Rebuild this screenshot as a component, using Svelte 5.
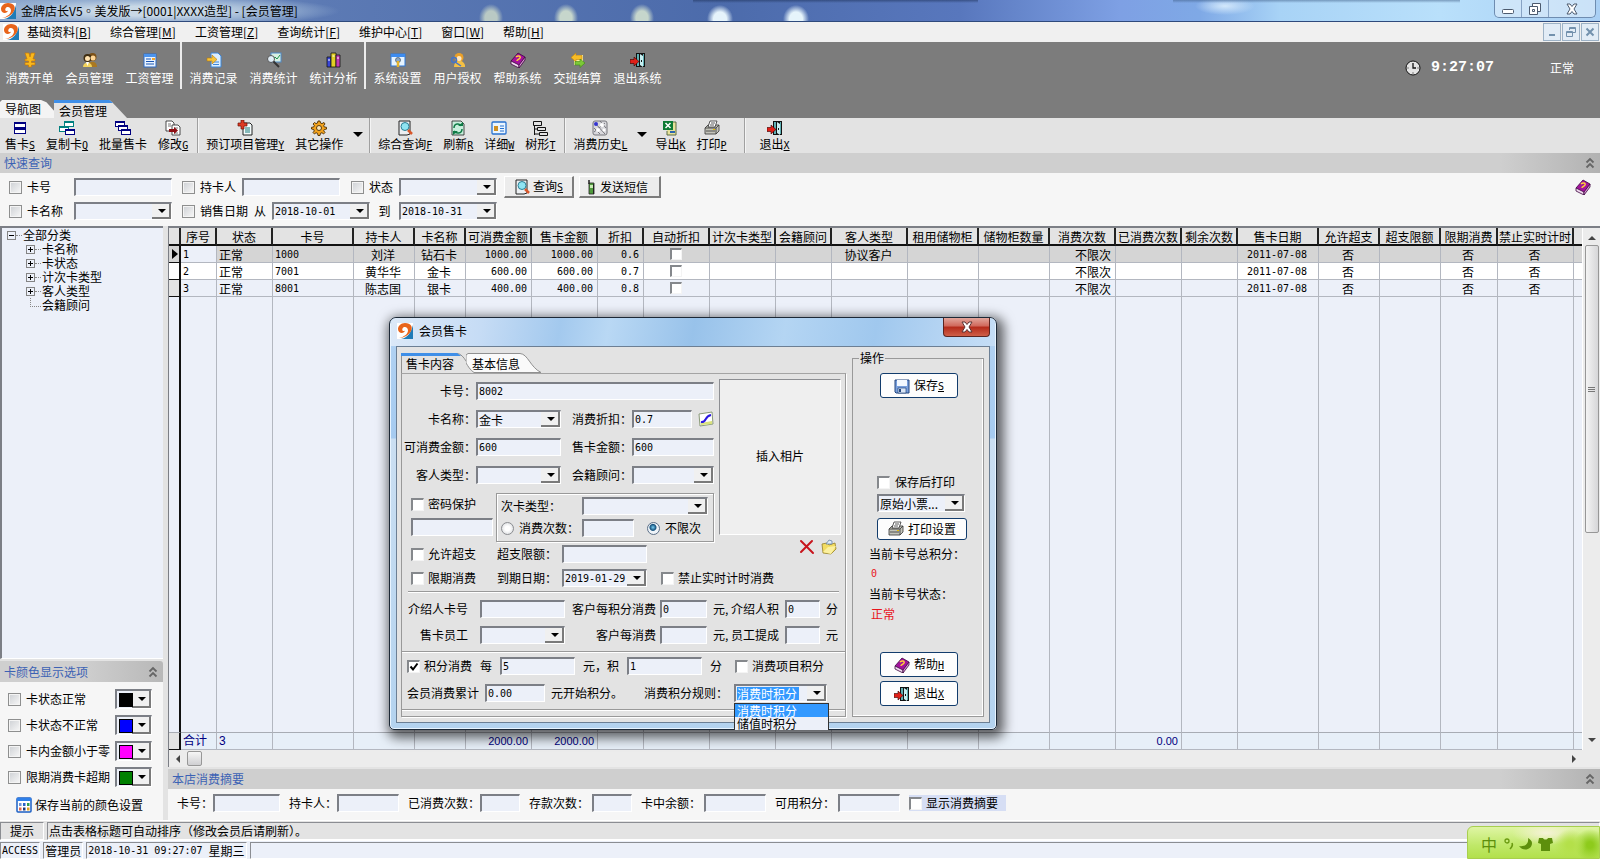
<script lang="ts">
    interface Tool {
        icon: string;
        text: string;
        key?: string;
        menu?: boolean;
    }

    interface Column {
        title: string;
        width: number;
        align: string;
        total?: string;
    }

    const menus = [
        ['基础资料', 'B'],
        ['综合管理', 'M'],
        ['工资管理', 'Z'],
        ['查询统计', 'F'],
        ['维护中心', 'T'],
        ['窗口', 'W'],
        ['帮助', 'H'],
    ];

    const navGroups: Tool[][] = [
        [
            { icon: 'yen', text: '消费开单' },
            { icon: 'members', text: '会员管理' },
            { icon: 'wage', text: '工资管理' },
        ],
        [
            { icon: 'record', text: '消费记录' },
            { icon: 'stats', text: '消费统计' },
            { icon: 'books', text: '统计分析' },
        ],
        [
            { icon: 'settings', text: '系统设置' },
            { icon: 'auth', text: '用户授权' },
            { icon: 'help', text: '帮助系统' },
            { icon: 'shift', text: '交班结算' },
            { icon: 'exit', text: '退出系统' },
        ],
    ];

    const toolGroups: Tool[][] = [
        [
            { icon: 'card', text: '售卡', key: 'S' },
            { icon: 'copycard', text: '复制卡', key: 'Q' },
            { icon: 'batch', text: '批量售卡' },
            { icon: 'edit', text: '修改', key: 'G' },
        ],
        [
            { icon: 'book', text: '预订项目管理', key: 'Y' },
            { icon: 'gear', text: '其它操作', menu: true },
        ],
        [
            { icon: 'search', text: '综合查询', key: 'F' },
            { icon: 'refresh', text: '刷新', key: 'R' },
            { icon: 'detail', text: '详细', key: 'W' },
            { icon: 'tree', text: '树形', key: 'T' },
        ],
        [
            { icon: 'history', text: '消费历史', key: 'L', menu: true },
            { icon: 'excel', text: '导出', key: 'K' },
            { icon: 'print', text: '打印', key: 'P' },
        ],
        [{ icon: 'exit', text: '退出', key: 'X' }],
    ];

    const treeNodes = ['卡名称', '卡状态', '计次卡类型', '客人类型', '会籍顾问'];

    const cardColors = [
        { text: '卡状态正常', color: '#000000' },
        { text: '卡状态不正常', color: '#0000ff' },
        { text: '卡内金额小于零', color: '#ff00ff' },
        { text: '限期消费卡超期', color: '#008000' },
    ];

    const columns: Column[] = [
        { title: '序号', width: 36, align: 'left', total: '合计' },
        { title: '状态', width: 56, align: 'left', total: '3' },
        { title: '卡号', width: 81, align: 'left' },
        { title: '持卡人', width: 61, align: 'center' },
        { title: '卡名称', width: 51, align: 'center' },
        { title: '可消费金额', width: 66, align: 'right', total: '2000.00' },
        { title: '售卡金额', width: 66, align: 'right', total: '2000.00' },
        { title: '折扣', width: 46, align: 'right' },
        { title: '自动折扣', width: 66, align: 'center' },
        { title: '计次卡类型', width: 66, align: 'center' },
        { title: '会籍顾问', width: 56, align: 'center' },
        { title: '客人类型', width: 76, align: 'center' },
        { title: '租用储物柜', width: 71, align: 'center' },
        { title: '储物柜数量', width: 71, align: 'center' },
        { title: '消费次数', width: 66, align: 'right' },
        { title: '已消费次数', width: 66, align: 'right', total: '0.00' },
        { title: '剩余次数', width: 56, align: 'right' },
        { title: '售卡日期', width: 81, align: 'center' },
        { title: '允许超支', width: 61, align: 'center' },
        { title: '超支限额', width: 61, align: 'center' },
        { title: '限期消费', width: 57, align: 'center' },
        { title: '禁止实时计时', width: 76, align: 'center' },
    ];

    const CHECK = 8;

    const rows = [
        ['1', '正常', '1000', '刘洋', '钻石卡', '1000.00', '1000.00', '0.6', '', '', '', '协议客户', '', '', '不限次', '', '', '2011-07-08', '否', '', '否', '否'],
        ['2', '正常', '7001', '黄华华', '金卡', '600.00', '600.00', '0.7', '', '', '', '', '', '', '不限次', '', '', '2011-07-08', '否', '', '否', '否'],
        ['3', '正常', '8001', '陈志国', '银卡', '400.00', '400.00', '0.8', '', '', '', '', '', '', '不限次', '', '', '2011-07-08', '否', '', '否', '否'],
    ];

    const summary = [
        { label: '卡号：', size: 'w67' },
        { label: '持卡人：', size: 'w62' },
        { label: '已消费次数：', size: 'w40' },
        { label: '存款次数：', size: 'w40' },
        { label: '卡中余额：', size: 'w62' },
        { label: '可用积分：', size: 'w62' },
    ];

    const rules = ['消费时积分', '储值时积分'];

    let current = $state(0);
    let rule = $state(0);

    const isLatin = (text: string) => /^[\x20-\x7e]+$/.test(text);
</script>

{#snippet logo()}
    <svg class="icon" viewBox="0 0 16 16" aria-hidden="true">
        <rect width="16" height="16" fill="#fff" />
        <path d="M16 2v14H4c6-1 10-6 12-14z" fill="#1f7cb8" />
        <path d="M8 0c6 0 8 4 6 8-2 4-7 7-12 7 5-1 9-4 9-7.500C11 4 7 3 5.500 5.500c-1 2 1 3.500 2.500 2C7.500 11 1 11 1 6c0-3 3-6 7-6z" fill="#e8641b" />
    </svg>
{/snippet}

{#snippet door()}
    <path d="M6 1h9v14H6z" fill="#111" />
    <path d="M7 2h2v12H7zM13 2h1v12h-1z" fill="#5fb0b4" />
    <path d="M10 2l3 2v11l-3-2z" fill="#c8eef0" />
    <path d="M11 8h1v2h-1z" fill="#111" />
    <path d="M0 7.500h4V5l5 4.500L4 14v-2.500H0z" fill="#e02018" stroke="#300" stroke-width=".6" />
{/snippet}

{#snippet windowShape(x: number, y: number, color: string)}
    <rect {x} {y} width="10" height="6" fill={color} />
    <rect x={x + 1} y={y + 2} width="8" height="3" fill="#fff" />
{/snippet}

{#snippet icon(name: string)}
    <svg class="icon" viewBox="0 0 16 16" aria-hidden="true">
        {#if name === 'yen'}
            <path d="M3 1h4l1 4 1-4h4l-2 6h2v2H9.500v1.500H13V13H9.500v2h-3v-2H3v-2.500h3.500V9H3V7h2z" fill="#f9b91c" stroke="#c77808" stroke-width=".7" />
        {:else if name === 'members'}
            <circle cx="10.500" cy="5" r="4" fill="#7b5017" />
            <path d="M6 15c0-7 9-7 9 0z" fill="#a97822" />
            <circle cx="5.500" cy="6" r="4" fill="#3f2d11" />
            <circle cx="5.500" cy="6.500" r="2.500" fill="#ffe2b0" />
            <circle cx="11" cy="6" r="2.500" fill="#ffd695" />
            <path d="M1 15c0-6 9-6 9 0z" fill="#f2d35c" />
            <path d="M4 10h3l-1.500 4z" fill="#fff" />
        {:else if name === 'wage'}
            <rect x="2" y="2" width="12" height="13" fill="#eaf4ff" stroke="#2d6bc4" />
            <path d="M2 2h12v3H2z" fill="#4b93ec" />
            <path d="M4 7h5M4 9.500h8M4 12h8" stroke="#1a56b4" />
            <path d="M10 6h3v2h-3z" fill="#f2a630" />
        {:else if name === 'record'}
            <path d="M5 1h7l3 3v11H5z" fill="#dcefff" stroke="#3d86d8" />
            <path d="M7 10h6M7 12.500h6" stroke="#3d86d8" />
            <path d="M1 6h5V3l5 4.500L6 12V9H1z" fill="#f7c43a" stroke="#b67a0c" stroke-width=".6" />
        {:else if name === 'stats'}
            <rect x="5" y="1" width="10" height="9" fill="#d8f0e4" stroke="#4f8ccb" />
            <path d="M6 8l3-3 2 2 3-4" fill="none" stroke="#1c944c" />
            <circle cx="5" cy="7" r="3.500" fill="#e9f5ff" fill-opacity=".9" stroke="#555" />
            <path d="M7.500 9.500L13 15" stroke="#333" stroke-width="2" />
        {:else if name === 'books'}
            <path d="M1 5h4v10H1z" fill="#3946d8" stroke="#111" stroke-width=".8" />
            <path d="M5 1h5v14H5z" fill="#e2cf26" stroke="#111" stroke-width=".8" />
            <path d="M10 3h4v12h-4z" fill="#c23bb4" stroke="#111" stroke-width=".8" />
            <path d="M6.500 4h2M11 6h2M2 8h2" stroke="#fff" />
        {:else if name === 'settings'}
            <rect x="1" y="2" width="14" height="12" fill="#e6f4ff" stroke="#2f79d6" />
            <path d="M1 2h14v3H1z" fill="#3c8cf0" />
            <circle cx="8" cy="8" r="2.500" fill="#8fa9c4" stroke="#456" stroke-width=".7" />
            <path d="M8 9v6" stroke="#e6b42a" stroke-width="2.500" />
        {:else if name === 'auth'}
            <circle cx="9" cy="5.500" r="4.500" fill="#eba028" />
            <path d="M4 15c0-8 9-8 11-2v2z" fill="#f4c044" />
            <circle cx="9" cy="6.500" r="2.500" fill="#ffe7c0" />
            <circle cx="4" cy="8" r="2.500" fill="none" stroke="#4574c8" stroke-width="1.500" />
            <path d="M5 10l6 4" stroke="#4574c8" stroke-width="1.500" />
        {:else if name === 'help'}
            <path d="M1 9l7-8 7 4-6 9z" fill="#a3129c" stroke="#3c0540" stroke-width=".8" />
            <path d="M1 9v3l8 4V13z" fill="#f1d9ef" stroke="#3c0540" stroke-width=".8" />
            <path d="M9 13v3l6-8V5z" fill="#d895d2" stroke="#3c0540" stroke-width=".8" />
            <path d="M6 5c2-2 5-1 4 1S7 7 7 9" fill="none" stroke="#ffcf3a" stroke-width="1.500" />
        {:else if name === 'shift'}
            <rect x="4" y="3" width="9" height="10" fill="#f6f0a0" />
            <path d="M1 5.500L6 1v2.500h6v4H6V10z" fill="#f8bd25" stroke="#c68208" stroke-width=".6" />
            <path d="M15 11l-5 4.500V13H5V9.500h5V7z" fill="#7cc838" stroke="#3c8a12" stroke-width=".6" />
        {:else if name === 'exit'}
            {@render door()}
        {:else if name === 'card'}
            <rect x="2" y="2" width="12" height="12" fill="#000080" />
            <path d="M3 4h10v3H3zM3 10h10v3H3z" fill="#fff" />
        {:else if name === 'copycard'}
            {@render windowShape(5, 1, '#008080')}
            {@render windowShape(0, 6, '#008080')}
            {@render windowShape(6, 9, '#000080')}
        {:else if name === 'batch'}
            {@render windowShape(0, 1, '#000080')}
            {@render windowShape(3, 5, '#000080')}
            {@render windowShape(6, 9, '#000080')}
        {:else if name === 'edit'}
            <path d="M1 1h6l2 2v8H1z" fill="#fff" stroke="#222" stroke-width=".8" />
            <path d="M7 5h6l2 2v8H7z" fill="#fff" stroke="#222" stroke-width=".8" />
            <path d="M3 4h3M3 6h3M9 8h4M9 13h4" stroke="#555" stroke-width=".8" />
            <path d="M4 9h5V7l4 3.500L9 14v-2H4z" fill="#8c0d12" />
        {:else if name === 'book'}
            <path d="M6 3h7l2 2v10H6z" fill="#f4fbfb" stroke="#222" />
            <path d="M8 8h5M8 10h5M8 12h5" stroke="#187878" />
            <path d="M4 0h3v3h3v3H7v3H4V6H1V3h3z" fill="#dd3a22" stroke="#6b1206" stroke-width=".7" />
        {:else if name === 'gear'}
            <path d="M7 1h2l.5 2 1.500.6L13 2.500 14 4l-1.300 1.700.6 1.300 2.200.3v1.800l-2.200.4-.6 1.300L14 12.500 12.500 14 11 12.700l-1.500.6L9 15.500H7l-.5-2.200-1.500-.6L3.500 14 2 12.500 3.300 11l-.6-1.500L.5 9V7.300L2.700 7l.6-1.500L2 4l1.500-1.500L5 3.600 6.500 3z" fill="#f2a31e" stroke="#4a2c03" stroke-width=".9" />
            <circle cx="8" cy="8" r="2.500" fill="#fbe6b8" stroke="#4a2c03" stroke-width=".9" />
        {:else if name === 'search'}
            <path d="M2 1h11v13l-3 1H2z" fill="#eceff2" stroke="#222" />
            <circle cx="8" cy="6.500" r="4" fill="#8fe4f2" stroke="#2b7f95" />
            <path d="M11 10l4 4" stroke="#d8572b" stroke-width="2.500" />
        {:else if name === 'refresh'}
            <path d="M2 1h9l3 3v11H2z" fill="#c8efdc" stroke="#222" stroke-width=".8" />
            <path d="M4 8c0-5 6-5 7-2M12 9c0 5-6 5-8 2" fill="none" stroke="#0e7a45" stroke-width="1.500" />
            <path d="M8 6h5V2zM8 11H3v4z" fill="#0e7a45" />
        {:else if name === 'detail'}
            <rect x="1" y="2" width="14" height="12" rx="1" fill="#eaf5ff" stroke="#2872d0" stroke-width="1.300" />
            <rect x="3" y="6" width="4" height="5" fill="#d09022" />
            <path d="M9 6h4M9 8.500h4M9 11h4" stroke="#2872d0" />
        {:else if name === 'tree'}
            <path d="M1.500 1.500h8v4h-8zM5.500 7.500h8v3h-8zM7.500 12.500h8v3h-8zM2.500 5v10M2.500 9h3M2.500 14h5" fill="none" stroke="#111" />
        {:else if name === 'history'}
            <rect x="1" y="1" width="14" height="14" rx="2" fill="#d8d8dc" stroke="#77777c" />
            <path d="M2 12l11-9M3 3l10 11M8 1l6 7M2 8l6 6" stroke="#77777c" />
            <circle cx="4" cy="4" r="2" fill="#3434d0" />
            <circle cx="10" cy="5" r="2" fill="#fff" />
            <circle cx="6" cy="10" r="2" fill="#fff" />
            <circle cx="12" cy="10" r="1.500" fill="#fff" />
        {:else if name === 'excel'}
            <path d="M6 2h8v13H5v-4" fill="#e6e29a" stroke="#5b6d45" />
            <rect x="1" y="1" width="10" height="9" fill="#0d7a34" />
            <path d="M3.500 3l5 5M8.500 3l-5 5" stroke="#fff" stroke-width="1.500" />
            <path d="M8 12h5" stroke="#2a66b0" stroke-width="2" />
        {:else if name === 'print'}
            <path d="M1 8l3-3h11v6l-3 3H1z" fill="#c3c3ba" stroke="#333" stroke-width=".8" />
            <path d="M4 7l2-6h7l-2 6z" fill="#fff" stroke="#333" stroke-width=".8" />
            <path d="M1 8h11l3-3M12 8v6M2 11h9M7 3h4M6 5h4" fill="none" stroke="#333" stroke-width=".8" />
            <path d="M9 9.500h2" stroke="#e8c000" />
        {:else if name === 'phone'}
            <path d="M5 4h5v11H5z" fill="#4f9a3c" stroke="#222" stroke-width=".8" />
            <path d="M5 1v4" stroke="#222" stroke-width="1.500" />
            <path d="M6 6h3v3H6z" fill="#c9ecb4" />
            <path d="M9 5h1v10H9z" fill="#222" />
        {:else if name === 'palette'}
            <rect x="1" y="1" width="14" height="14" rx="1" fill="#fff" stroke="#1b5fc4" stroke-width="1.500" />
            <path d="M1 1h14v3H1z" fill="#2f80ea" />
            <path d="M3 6h2.500v3H3z" fill="#6f94d8" />
            <path d="M7 6h2.500v3H7z" fill="#2862c8" />
            <path d="M11 6h2.500v3H11z" fill="#2f9c50" />
            <path d="M3 10.500h2.500v3H3z" fill="#e2694a" />
            <path d="M7 10.500h2.500v3H7z" fill="#203878" />
            <path d="M11 10.500h2.500v3H11z" fill="#e0a020" />
        {:else if name === 'save'}
            <path d="M1 2h14v13H2l-1-1z" fill="#7aa0dc" stroke="#24467f" />
            <path d="M3 2h10v6H3z" fill="#f4f9ff" />
            <path d="M4 10h8v5H4z" fill="#dbe6f5" stroke="#24467f" stroke-width=".7" />
            <path d="M5 11h2v3H5z" fill="#24467f" />
        {:else if name === 'curve'}
            <path d="M1 3l13-2 1 12-13 2z" fill="#fff" stroke="#8a9a78" />
            <path d="M3 12l11-2v3l-11 1z" fill="#d9e27c" />
            <path d="M3 11c6 1 3-6 10-7" fill="none" stroke="#2a18e0" stroke-width="2" />
        {:else if name === 'delete'}
            <path d="M2 2l12 12M13 2L2 13" stroke="#c8141c" stroke-width="2" stroke-linecap="round" />
        {:else if name === 'folder'}
            <path d="M1 5l5-1 2 2 6-2 1 6-5 5-8-1z" fill="#f2dc62" stroke="#94802a" stroke-width=".8" />
            <path d="M2 13l5-5 8-1-5 8z" fill="#fbf0a0" />
            <path d="M5 5l3-4 3 1v3z" fill="#dcebf8" stroke="#6a86a8" stroke-width=".8" />
        {:else if name === 'clock'}
            <circle cx="8" cy="8" r="7" fill="#e4e4e4" stroke="#111" />
            <path d="M8 3v5h3" fill="none" stroke="#111" stroke-width="1.300" />
            <path d="M8 13.500v-1M2.500 8h1M12.500 8h1" stroke="#111" />
        {/if}
    </svg>
{/snippet}

{#snippet check(text: string, checked = false, soft = false)}
    <label class="check" class:soft>
        <input type="checkbox" {checked} />
        <span>{text}</span>
    </label>
{/snippet}

{#snippet combo(label: string, value = '')}
    <span class="combo">
        <select class:mono={isLatin(value)} aria-label={label}>
            <option>{value}</option>
        </select>
    </span>
{/snippet}

{#snippet chevrons()}
    <button class="collapse" aria-label="折叠">
        <svg viewBox="0 0 10 12" aria-hidden="true">
            <path d="M1.500 5.500L5 2l3.500 3.500M1.500 10.500L5 7l3.500 3.500" fill="none" stroke="#666" stroke-width="1.800" />
        </svg>
    </button>
{/snippet}

<div class="app">
    <header class="titlebar">
        {@render logo()}
        <h1>金牌店长V5◦美发版→[0001|XXXX造型] - [会员管理]</h1>
        <div class="winbuttons">
            <button aria-label="最小化">
                <svg viewBox="0 0 14 12" aria-hidden="true"><rect x="1.500" y="6.500" width="11" height="4" rx="1" fill="#fff" stroke="#4c5a6e" /></svg>
            </button>
            <button aria-label="还原">
                <svg viewBox="0 0 14 12" aria-hidden="true">
                    <path d="M4.500.5h8v8h-8z" fill="#fff" stroke="#4c5a6e" />
                    <path d="M1.500 3.500h8v8h-8z" fill="#fff" stroke="#4c5a6e" />
                    <path d="M4.500 6.500h2v2h-2z" fill="none" stroke="#4c5a6e" />
                </svg>
            </button>
            <button class="wide" aria-label="关闭">
                <svg viewBox="0 0 14 12" aria-hidden="true">
                    <path d="M2 1h3l2 2.500L9 1h3L9 6l3 5H9L7 8.500 5 11H2l3-5z" fill="#fff" stroke="#4c5a6e" />
                </svg>
            </button>
        </div>
    </header>

    <nav class="menubar">
        {@render logo()}
        {#each menus as [text, key]}
            <button>{text}[<u>{key}</u>]</button>
        {/each}
        <div class="mdi">
            <button aria-label="最小化子窗口">
                <svg viewBox="0 0 12 12" aria-hidden="true"><path d="M3 9h6" stroke="#7391ad" stroke-width="2" /></svg>
            </button>
            <button aria-label="还原子窗口">
                <svg viewBox="0 0 12 12" aria-hidden="true"><path d="M4.500 4V1.500h6v5H8M1.500 5.500h6v5h-6zM1.500 6.500h6M4.500 2.500h6" fill="none" stroke="#7391ad" /></svg>
            </button>
            <button aria-label="关闭子窗口">
                <svg viewBox="0 0 12 12" aria-hidden="true"><path d="M2.500 2.500l7 7M9.500 2.500l-7 7" stroke="#7391ad" stroke-width="2" /></svg>
            </button>
        </div>
    </nav>

    <div class="navbar">
        <div class="navtools">
            {#each navGroups as group}
                <div class="navgroup">
                    {#each group as tool}
                        <button>{@render icon(tool.icon)}<span>{tool.text}</span></button>
                    {/each}
                </div>
            {/each}
            <div class="clock">
                {@render icon('clock')}
                <time>9:27:07</time>
                <span>正常</span>
            </div>
        </div>
        <div class="doctabs">
            <button class="doctab">导航图</button>
            <button class="doctab active">会员管理</button>
        </div>
    </div>

    <div class="toolbar">
        {#each toolGroups as group}
            <div class="toolgroup">
                {#each group as tool}
                    <button>
                        {@render icon(tool.icon)}
                        <span>{tool.text}{#if tool.key}<u>{tool.key}</u>{/if}</span>
                    </button>
                    {#if tool.menu}
                        <button class="more" aria-label="{tool.text}菜单"></button>
                    {/if}
                {/each}
            </div>
        {/each}
    </div>

    <div class="section">
        <h2>快速查询</h2>
        {@render chevrons()}
    </div>

    <div class="filters">
        <div class="filter-row">
            <div class="c-first">{@render check('卡号', false, true)}</div>
            <input class="w98" type="text" aria-label="卡号" />
            <div class="c-holder">{@render check('持卡人', false, true)}</div>
            <input class="w98" type="text" aria-label="持卡人" />
            <div class="c-state">{@render check('状态', false, true)}</div>
            <div class="w98">{@render combo('状态')}</div>
            <button class="raised">{@render icon('search')}<span>查询<u>S</u></span></button>
            <button class="raised tight">{@render icon('phone')}<span>发送短信</span></button>
            <button class="plain" aria-label="帮助">{@render icon('help')}</button>
        </div>
        <div class="filter-row">
            <div class="c-first">{@render check('卡名称', false, true)}</div>
            <div class="w98">{@render combo('卡名称')}</div>
            <div class="c-date">{@render check('销售日期', false, true)}<span>从</span></div>
            <div class="w98">{@render combo('开始日期', '2018-10-01')}</div>
            <span class="c-to">到</span>
            <div class="w98">{@render combo('结束日期', '2018-10-31')}</div>
        </div>
    </div>

    <div class="body">
        <aside>
            <ul class="tree">
                <li>
                    <span class="node root"><i class="box"></i>全部分类</span>
                    <ul>
                        {#each treeNodes as node, i}
                            <li>
                                <span class="node" class:leaf={i === treeNodes.length - 1}>
                                    <i class="box" class:closed={i < treeNodes.length - 1}></i>{node}
                                </span>
                            </li>
                        {/each}
                    </ul>
                </li>
            </ul>
            <div class="section side">
                <h2>卡颜色显示选项</h2>
                {@render chevrons()}
            </div>
            <div class="colors">
                {#each cardColors as item}
                    <div class="color-row">
                        {@render check(item.text, false, true)}
                        <span class="combo swatchbox">
                            <select aria-label="{item.text}颜色"><option></option></select>
                            <i class="swatch" style="background: {item.color}"></i>
                        </span>
                    </div>
                {/each}
                <button class="plain save-colors">{@render icon('palette')}<span>保存当前的颜色设置</span></button>
            </div>
        </aside>

        <main>
            <div class="grid">
                <div class="grid-scroll">
                    <table>
                        <colgroup>
                            <col style="width: 12px" />
                            {#each columns as column}
                                <col style="width: {column.width}px" />
                            {/each}
                            <col />
                        </colgroup>
                        <thead>
                            <tr>
                                <th></th>
                                {#each columns as column}
                                    <th>{column.title}</th>
                                {/each}
                                <th></th>
                            </tr>
                        </thead>
                        <tbody>
                            {#each rows as row, r}
                                <tr class:current={r === current} class:odd={r === 1} onclick={() => (current = r)}>
                                    <td class="mark"></td>
                                    {#each row as cell, c}
                                        <td class={columns[c].align} class:mono={isLatin(cell)}>
                                            {#if c === CHECK}
                                                <input type="checkbox" aria-label="自动折扣" />
                                            {:else}
                                                {cell}
                                            {/if}
                                        </td>
                                    {/each}
                                    <td></td>
                                </tr>
                            {/each}
                            <tr class="filler">
                                <td class="mark"></td>
                                {#each columns as _}
                                    <td></td>
                                {/each}
                                <td></td>
                            </tr>
                        </tbody>
                        <tfoot>
                            <tr>
                                <td class="mark"></td>
                                {#each columns as column}
                                    <td class={column.align}>{column.total ?? ''}</td>
                                {/each}
                                <td></td>
                            </tr>
                        </tfoot>
                    </table>
                </div>
                <div class="vscroll">
                    <i class="arrow up"></i>
                    <div class="vthumb"></div>
                    <i class="arrow down"></i>
                </div>
            </div>
            <div class="hscroll">
                <i class="arrow left"></i>
                <div class="hthumb"></div>
                <i class="arrow right"></i>
            </div>
            <div class="section">
                <h2>本店消费摘要</h2>
                {@render chevrons()}
            </div>
            <div class="summary">
                {#each summary as item}
                    <label><span>{item.label}</span><input class={item.size} type="text" /></label>
                {/each}
                <div class="show-summary">{@render check('显示消费摘要')}</div>
            </div>
        </main>
    </div>

    <footer>
        <div class="status hint">
            <span class="cell tip">提示</span>
            <span class="cell rest">点击表格标题可自动排序（修改会员后请刷新）。</span>
        </div>
        <div class="status">
            <span class="cell mono">ACCESS</span>
            <span class="cell">管理员</span>
            <span class="cell stamp"><time class="mono">2018-10-31 09:27:07</time>星期三</span>
            <span class="cell rest"></span>
        </div>
    </footer>

    <div class="dialog" role="dialog" aria-label="会员售卡">
        <div class="dialog-title">
            {@render logo()}
            <h2>会员售卡</h2>
            <button aria-label="关闭">
                <svg viewBox="0 0 14 12" aria-hidden="true">
                    <path d="M2 1h3l2 2.500L9 1h3L9 6l3 5H9L7 8.500 5 11H2l3-5z" fill="#fff" stroke="#5c3434" />
                </svg>
            </button>
        </div>
        <div class="client">
            <div class="card-form">
                <div class="tabs">
                    <button class="tab">
                        <svg viewBox="0 0 76 20" aria-hidden="true">
                            <path d="M.5 20V.5H56C64 1 66 19 76 19.500V20z" fill="#e3e3e3" />
                            <path d="M.5 20V.5H56C64 1 66 14 75 19.500" fill="none" stroke="#909090" />
                            <path d="M0 0h56l4 3H0z" fill="#3f8fe8" />
                        </svg>
                        <span>售卡内容</span>
                    </button>
                    <button class="tab second">
                        <svg viewBox="0 0 76 20" aria-hidden="true">
                            <path d="M0 10V2L2 .5H54C62 1 64 14 75 19.500H8C4 17 2 13 0 10z" fill="#fafafa" stroke="#909090" />
                        </svg>
                        <span>基本信息</span>
                    </button>
                </div>
                <div class="page">
                    <div class="upper">
                        <div class="upper-left">
                            <div class="fields">
                                <label for="card-no">卡号：</label>
                                <input id="card-no" class="span3" type="text" value="8002" />

                                <span class="lbl">卡名称：</span>
                                {@render combo('卡名称', '金卡')}
                                <label for="discount">消费折扣：</label>
                                <div class="with-icon">
                                    <input id="discount" type="text" value="0.7" />
                                    <button class="plain" aria-label="折扣设置">{@render icon('curve')}</button>
                                </div>

                                <label for="usable">可消费金额：</label>
                                <input id="usable" type="text" value="600" />
                                <label for="price">售卡金额：</label>
                                <input id="price" type="text" value="600" />

                                <span class="lbl">客人类型：</span>
                                {@render combo('客人类型')}
                                <span class="lbl">会籍顾问：</span>
                                {@render combo('会籍顾问')}
                            </div>
                            <div class="times">
                                <div class="password">
                                    {@render check('密码保护')}
                                    <input type="password" aria-label="密码" />
                                </div>
                                <div class="times-box">
                                    <span>次卡类型：</span>
                                    <div class="type">{@render combo('次卡类型')}</div>
                                    <label class="radio"><input type="radio" name="times" />消费次数：</label>
                                    <input type="text" aria-label="消费次数" />
                                    <label class="radio"><input type="radio" name="times" checked />不限次</label>
                                </div>
                            </div>
                            <div class="limit">
                                {@render check('允许超支')}
                                <label for="overdraft">超支限额：</label>
                                <input id="overdraft" type="text" />
                            </div>
                        </div>
                        <div class="upper-right">
                            <button class="photo">插入相片</button>
                            <div class="photo-tools">
                                <button class="plain" aria-label="删除相片">{@render icon('delete')}</button>
                                <button class="plain" aria-label="打开相片">{@render icon('folder')}</button>
                            </div>
                        </div>
                    </div>
                    <div class="limit last">
                        {@render check('限期消费')}
                        <span>到期日期：</span>
                        {@render combo('到期日期', '2019-01-29')}
                        {@render check('禁止实时计时消费')}
                    </div>
                    <hr class="short" />
                    <div class="referral">
                        <label for="ref-card">介绍人卡号</label>
                        <input id="ref-card" type="text" />
                        <label class="near" for="ref-spend">客户每积分消费</label>
                        <input id="ref-spend" type="text" value="0" />
                        <label class="mid" for="ref-points">元, 介绍人积</label>
                        <input id="ref-points" type="text" value="0" />
                        <span class="unit">分</span>

                        <span class="lbl">售卡员工</span>
                        {@render combo('售卡员工')}
                        <label class="near" for="staff-spend">客户每消费</label>
                        <input id="staff-spend" type="text" />
                        <label class="mid" for="staff-share">元, 员工提成</label>
                        <input id="staff-share" type="text" />
                        <span class="unit">元</span>
                    </div>
                    <hr />
                    <div class="points">
                        {@render check('积分消费', true)}
                        <label for="each">每</label>
                        <input id="each" class="w75" type="text" value="5" />
                        <label for="gain">元，积</label>
                        <input id="gain" class="w75" type="text" value="1" />
                        <span>分</span>
                        <div class="push">{@render check('消费项目积分')}</div>
                    </div>
                    <div class="points second">
                        <label for="start">会员消费累计</label>
                        <input id="start" class="w60" type="text" value="0.00" />
                        <span>元开始积分。</span>
                        <span class="push">消费积分规则：</span>
                        <div class="rule">
                            <span class="combo picked">
                                <select aria-label="消费积分规则" bind:value={rule}>
                                    {#each rules as text, i}
                                        <option value={i}>{text}</option>
                                    {/each}
                                </select>
                            </span>
                            <ul class="dropdown">
                                {#each rules as text, i}
                                    <li class:selected={i === rule}>{text}</li>
                                {/each}
                            </ul>
                        </div>
                    </div>
                    <hr />
                </div>
            </div>

            <fieldset>
                <legend>操作</legend>
                <button class="round">{@render icon('save')}<span>保存<u>S</u></span></button>
                <div class="print-block">
                    {@render check('保存后打印')}
                    {@render combo('打印格式', '原始小票...')}
                    <button class="round low">{@render icon('print')}<span>打印设置</span></button>
                </div>
                <dl>
                    <dt>当前卡号总积分：</dt>
                    <dd class="mono">0</dd>
                    <dt>当前卡号状态：</dt>
                    <dd>正常</dd>
                </dl>
                <button class="round">{@render icon('help')}<span>帮助<u>H</u></span></button>
                <button class="round">{@render icon('exit')}<span>退出<u>X</u></span></button>
            </fieldset>
        </div>
    </div>

    <div class="ime">
        <span>中</span>
        <svg viewBox="0 0 50 20" aria-hidden="true">
            <circle cx="4" cy="7" r="2" fill="none" stroke="#6a9a10" stroke-width="1.300" />
            <path d="M9 9c1 2 0 4-2 6" fill="none" stroke="#6a9a10" stroke-width="1.600" />
            <path d="M25 4c1 6-3 9-9 8 4 6 13 4 13-3 0-2-2-4-4-5z" fill="#5d8f0c" />
            <path d="M36 4h4c1 2 4 2 5 0h4l1 5-3 1v7h-9v-7l-3-1z" fill="#5d8f0c" />
        </svg>
    </div>
</div>

<style>
    :global(body) {
        overflow: hidden;
    }

    .app {
        --field: #ecf0f9;
        --face: #e3e3e3;
        position: relative;
        display: flex;
        flex-direction: column;
        height: 100vh;
        overflow: hidden;
        background: var(--face);
        color: #000;
        font-family: "Noto Sans CJK SC", sans-serif;
        font-size: 12px;
        line-height: 16px;
        white-space: nowrap;
    }

    .app * {
        box-sizing: border-box;
    }

    h1,
    h2,
    ul,
    dl,
    dd {
        margin: 0;
        padding: 0;
        font-size: 12px;
        font-weight: normal;
        list-style: none;
    }

    button,
    input,
    select {
        margin: 0;
        padding: 0;
        color: inherit;
        font: inherit;
    }

    button {
        display: flex;
        align-items: center;
        border: none;
        background: none;
    }

    .icon {
        flex: none;
        display: block;
        width: 16px;
        height: 16px;
    }

    .mono,
    .toolbar u,
    .raised u,
    .round u {
        font-family: "DejaVu Sans Mono", monospace;
        font-size: 10px;
    }

    /* shared controls */

    input[type='text'],
    input[type='password'] {
        width: 100%;
        height: 18px;
        padding: 0 0 1px 1px;
        border: 1px solid;
        border-width: 2px 1px 1px 2px;
        border-color: #7c7f86 #fff #fff #7c7f86;
        border-radius: 0;
        background: var(--field);
        font-family: "DejaVu Sans Mono", monospace;
        font-size: 10px;
        outline: none;
    }

    input[type='checkbox'] {
        appearance: none;
        flex: none;
        width: 13px;
        height: 13px;
        border: 1px solid;
        border-width: 2px 1px 1px 2px;
        border-color: #85888c #f4f4f4 #f4f4f4 #85888c;
        background: #fff;
    }

    input[type='checkbox']:checked {
        background: #fff url("data:image/svg+xml,%3Csvg xmlns='http://www.w3.org/2000/svg' viewBox='0 0 10 10'%3E%3Cpath d='M1.500 4.500l2.500 3 4.500-6' fill='none' stroke='black' stroke-width='2'/%3E%3C/svg%3E") center / 10px no-repeat;
    }

    .soft input[type='checkbox'] {
        border: 1px solid #8e8f8f;
        background: linear-gradient(135deg, #cdd0d4, #f8f8f8);
        box-shadow: inset 0 0 0 1px #f4f4f4;
    }

    input[type='radio'] {
        appearance: none;
        width: 13px;
        height: 13px;
        border: 1px solid #8a8c90;
        border-radius: 50%;
        background: radial-gradient(#fff 30%, #d0d3d6);
    }

    input[type='radio']:checked {
        border-color: #5c7088;
        background: radial-gradient(circle at 45% 40%, #7ad0f4 0, #14507c 3px, #14507c 3px, #eef3f8 4px);
    }

    .check,
    .radio {
        display: flex;
        align-items: center;
        gap: 4px;
    }

    .check.soft {
        gap: 5px;
    }

    .combo {
        position: relative;
        display: block;
        height: 18px;
        border: 2px solid;
        border-width: 2px 1px 1px 2px;
        border-color: #7c7f86 #fff #fff #7c7f86;
        background: var(--field);
    }

    .combo select {
        appearance: none;
        display: block;
        width: 100%;
        height: 100%;
        padding: 0 17px 0 1px;
        border: none;
        border-radius: 0;
        background: transparent;
        line-height: 15px;
        outline: none;
    }

    .combo select.mono {
        font-family: "DejaVu Sans Mono", monospace;
        font-size: 10px;
    }

    .combo::before {
        content: '';
        position: absolute;
        top: 0;
        right: 0;
        bottom: 0;
        width: 17px;
        border-right: 2px solid #7a7a7a;
        border-bottom: 2px solid #7a7a7a;
        background: #f0f0f0;
        pointer-events: none;
    }

    .combo::after {
        content: '';
        position: absolute;
        top: 5px;
        right: 5px;
        border: 4px solid transparent;
        border-top-color: #000;
        border-bottom: none;
        pointer-events: none;
    }

    .plain {
        gap: 4px;
    }

    .raised {
        gap: 3px;
        height: 22px;
        padding: 0 9px;
        border: 1px solid;
        border-width: 1px 2px 2px 1px;
        border-color: #fff #7c7c7c #7c7c7c #fff;
        background: #ececec;
    }

    .w98 {
        flex: none;
        width: 98px !important;
    }

    .w75 {
        width: 75px !important;
    }

    .w67 {
        width: 67px !important;
    }

    .w62 {
        width: 62px !important;
    }

    .w60 {
        width: 60px !important;
    }

    .w40 {
        width: 40px !important;
    }

    /* title bar */

    .titlebar {
        flex: none;
        display: flex;
        align-items: center;
        gap: 5px;
        height: 22px;
        border-bottom: 1px solid #2f4a7c;
        background:
            linear-gradient(rgba(30, 50, 90, .55), transparent 3px) 693px 0 / 285px 4px no-repeat,
            linear-gradient(rgba(60, 90, 130, .5), transparent 3px) 1173px 0 / 287px 4px no-repeat,
            radial-gradient(ellipse 190px 16px at 150px 11px, rgba(205, 220, 232, .95) 30%, rgba(160, 185, 215, .75) 70%, transparent),
            radial-gradient(ellipse 12px 14px at 491px 18px, #b9c9c4 50%, transparent),
            radial-gradient(ellipse 12px 14px at 566px 18px, #c6d6cc 50%, transparent),
            radial-gradient(ellipse 12px 14px at 642px 18px, #c6d6cc 50%, transparent),
            radial-gradient(ellipse 13px 14px at 720px 19px, #e6f4fb 50%, transparent),
            radial-gradient(ellipse 13px 14px at 796px 19px, #e6f4fb 50%, transparent),
            radial-gradient(ellipse 30px 9px at 1225px 6px, #d3e8fb, transparent),
            linear-gradient(90deg, #8ba6cc 0, #5c7ab4 20%, #4c6bab 45%, #5877bd 60%, #7ea0e4 70%, #7fa9e6 75%, #a8d3f6 80%, #b9e0fb 90%, #a9cff4 100%);
    }

    .titlebar h1 {
        flex: 1;
    }

    .winbuttons {
        align-self: flex-start;
        display: flex;
        height: 18px;
        margin-right: 4px;
        border: 1px solid #6e8cb0;
        border-top: none;
        border-radius: 0 0 5px 5px;
        background: rgba(225, 238, 250, .6);
    }

    .winbuttons button {
        justify-content: center;
        width: 27px;
        border-right: 1px solid #87a3c4;
    }

    .winbuttons .wide {
        width: 46px;
        border-right: none;
    }

    .winbuttons svg {
        width: 14px;
        height: 12px;
    }

    .menubar {
        flex: none;
        display: flex;
        align-items: center;
        gap: 19px;
        height: 20px;
        padding-left: 3px;
        background: #f0f0f0;
    }

    .menubar > .icon {
        margin-right: -11px;
    }

    .mdi {
        display: flex;
        gap: 1px;
        margin-left: auto;
        margin-right: 1px;
    }

    .mdi button {
        justify-content: center;
        width: 18px;
        height: 18px;
        border: 1px solid #9db2c6;
        background: #e2ecf6;
    }

    .mdi svg {
        width: 12px;
        height: 12px;
    }

    /* navigation */

    .navbar {
        flex: none;
        display: flex;
        flex-direction: column;
        justify-content: space-between;
        height: 76px;
        background: #7c7c7c;
        color: #fff;
    }

    .navtools {
        display: flex;
    }

    .navgroup {
        display: flex;
        height: 47px;
    }

    .navgroup + .navgroup {
        padding-left: 2px;
        border-left: 2px solid #ececec;
    }

    .navgroup button {
        flex-direction: column;
        gap: 2px;
        width: 60px;
        padding: 10px 1px 0 0;
    }

    .clock {
        display: flex;
        align-items: center;
        gap: 10px;
        margin-left: auto;
        padding: 4px 26px 0 0;
    }

    .clock time {
        margin-right: 46px;
        font: bold 15px "Liberation Mono", monospace;
    }

    .doctabs {
        display: flex;
        color: #000;
    }

    .doctab {
        height: 18px;
        padding: 0 13px 0 5px;
        background: #f4f4f4;
        clip-path: polygon(0 2px, 2px 0, 76% 0, 86% 12%, 100% 60%, 100% 100%, 0 100%);
    }

    .doctab.active {
        padding: 0 20px 0 5px;
        border-top: 3px solid #3f8fe8;
        background: var(--face);
        clip-path: polygon(0 0, 76% 0, 80% 14%, 100% 100%, 0 100%);
    }

    .toolbar {
        flex: none;
        display: flex;
        height: 35px;
        background: var(--face);
    }

    .toolgroup {
        display: flex;
        padding-right: 3px;
        border-right: 2px groove #f4f4f4;
    }

    .toolgroup + .toolgroup {
        padding-left: 2px;
    }

    .toolgroup:last-child {
        padding-left: 9px;
        border-right: none;
    }

    .toolgroup button {
        flex-direction: column;
        padding: 2px 6px 0 5px;
    }

    .toolgroup .more {
        width: 17px;
        padding: 14px 0 0;
    }

    .more::before {
        content: '';
        border: 5px solid transparent;
        border-top-color: #000;
        border-bottom: none;
    }

    .toolgroup:nth-child(4) {
        padding-right: 11px;
    }

    .section {
        flex: none;
        display: flex;
        align-items: center;
        justify-content: space-between;
        height: 20px;
        padding: 0 5px 0 4px;
        background: linear-gradient(90deg, #cfcfcf calc(100% - 100px), #b2b2b2);
        color: #3c62b4;
    }

    .section.side {
        height: 21px;
        border-radius: 0 3px 0 0;
        background: linear-gradient(90deg, #cfcfcf 50%, #b8b8b8);
    }

    .collapse svg {
        width: 10px;
        height: 12px;
    }

    .filters {
        flex: none;
        display: flex;
        flex-direction: column;
        gap: 2px;
        height: 53px;
        padding: 3px 9px 0;
        background: #f6f6f6;
    }

    .filter-row {
        display: flex;
        align-items: center;
        height: 22px;
    }

    .c-first {
        width: 65px;
    }

    .c-holder {
        width: 70px;
        padding-left: 10px;
    }

    .c-state {
        width: 59px;
        padding-left: 11px;
    }

    .c-date {
        display: flex;
        gap: 6px;
        width: 100px;
        padding-left: 10px;
    }

    .c-to {
        width: 29px;
        text-align: center;
    }

    .filter-row .raised {
        margin-left: 7px;
    }

    .filter-row .raised + .raised {
        margin-left: 5px;
    }

    .raised.tight {
        gap: 0;
        padding: 0 11px 0 4px;
    }

    .filter-row .plain {
        margin-left: auto;
    }

    /* side panel */

    .body {
        flex: 1;
        display: flex;
        min-height: 0;
    }

    aside {
        flex: none;
        display: flex;
        flex-direction: column;
        width: 163px;
        margin-right: 5px;
    }

    .tree {
        flex: 1;
        margin-bottom: 2px;
        padding: 0 0 0 5px;
        border: 2px solid;
        border-width: 2px 0 1px 2px;
        border-color: #7c7f86 #fff #fff #7c7f86;
        background: var(--field);
    }

    .tree ul {
        padding-left: 19px;
    }

    .node {
        display: flex;
        align-items: center;
        gap: 7px;
        height: 14px;
    }

    .box {
        position: relative;
        width: 9px;
        height: 9px;
        border: 1px solid #848484;
        background: linear-gradient(#000, #000) center / 5px 1px no-repeat;
    }

    .box::after {
        content: '';
        position: absolute;
        top: 3px;
        left: 8px;
        width: 6px;
        border-top: 1px dotted #888;
    }

    .box.closed {
        background:
            linear-gradient(#000, #000) center / 5px 1px no-repeat,
            linear-gradient(#000, #000) center / 1px 5px no-repeat;
    }

    .leaf .box {
        border-color: transparent;
        background: none;
    }

    .leaf .box::after {
        top: -4px;
        left: 3px;
        width: 10px;
        height: 8px;
        border-top: none;
        border-bottom: 1px dotted #888;
        border-left: 1px dotted #888;
    }

    .colors {
        flex: none;
        display: flex;
        flex-direction: column;
        gap: 6px;
        height: 138px;
        padding: 7px 11px 0 8px;
        background: #f6f6f6;
    }

    .color-row {
        display: flex;
        align-items: center;
        justify-content: space-between;
    }

    .swatchbox {
        width: 37px;
        height: 20px;
    }

    .swatchbox::after {
        top: 6px;
    }

    .swatch {
        position: absolute;
        top: 2px;
        left: 2px;
        width: 14px;
        height: 14px;
        border: 1px solid #000;
        pointer-events: none;
    }

    .save-colors {
        gap: 3px;
        margin: 4px 0 0 8px;
    }

    /* card list */

    main {
        flex: 1;
        display: flex;
        flex-direction: column;
        min-width: 0;
    }

    .grid {
        flex: 1;
        display: flex;
        min-height: 0;
        border-top: 2px solid #7c7f86;
        border-left: 1px solid #7c7f86;
    }

    .grid-scroll {
        flex: 1;
        min-width: 0;
        overflow: hidden;
        background: var(--field);
    }

    table {
        width: 100%;
        height: 100%;
        border-spacing: 0;
        table-layout: fixed;
        line-height: 15px;
    }

    th {
        height: 18px;
        padding: 0;
        border-right: 2px solid #222;
        border-bottom: 2px solid #111;
        background: var(--face);
        font-weight: normal;
        overflow: hidden;
    }

    th:last-child {
        border-right: none;
    }

    td {
        height: 17px;
        padding: 0 4px 0 2px;
        border-right: 1px solid #b3b7c0;
        border-bottom: 1px solid #b3b7c0;
        overflow: hidden;
    }

    td:last-child {
        border-right: none;
    }

    td input[type='checkbox'] {
        display: block;
        width: 12px;
        height: 12px;
        margin: auto;
    }

    .left {
        text-align: left;
    }

    .center {
        text-align: center;
    }

    .right {
        text-align: right;
    }

    .mark {
        position: relative;
        padding: 0;
        border-right: 2px solid #111;
        border-bottom-color: #111;
        background: var(--face);
    }

    .current .mark::before {
        content: '';
        position: absolute;
        top: 3px;
        left: 3px;
        border: 5px solid transparent;
        border-left: 6px solid #000;
        border-right: none;
    }

    .current td {
        background: #d5d5d5;
    }

    .current td:nth-child(2) {
        background: var(--field);
    }

    .odd td {
        background: #fff;
    }

    .filler td {
        height: auto;
        border-bottom-color: #a8acb4;
    }

    .filler .mark {
        background: var(--field);
    }

    tfoot td {
        background: #e7eff8;
        color: #000080;
        font-family: "Liberation Sans", "Noto Sans CJK SC", sans-serif;
    }

    tfoot .right {
        padding-right: 3px;
        font-size: 11px;
    }

    .vscroll {
        flex: none;
        display: flex;
        flex-direction: column;
        align-items: center;
        width: 18px;
        padding: 8px 0;
        border-left: 1px solid #fff;
        background: #ececec;
    }

    .vthumb {
        flex: none;
        width: 14px;
        height: 57%;
        margin: 5px 0 auto;
        border: 1px solid #979797;
        border-radius: 2px;
        background:
            linear-gradient(#777 1px, transparent 1px, transparent 2px, #777 2px, #777 3px, transparent 3px, transparent 4px, #777 4px) center / 7px 5px no-repeat,
            linear-gradient(90deg, #f4f4f4, #d6d6d8);
    }

    .hscroll {
        flex: none;
        display: flex;
        align-items: center;
        height: 17px;
        margin-bottom: 2px;
        padding: 0 24px 0 7px;
        border-left: 1px solid #7c7f86;
        background: #ececec;
    }

    .hthumb {
        width: 15px;
        height: 15px;
        margin: 0 auto 0 7px;
        border: 1px solid #979797;
        border-radius: 2px;
        background: linear-gradient(#f6f6f6, #cfcfd2);
    }

    .arrow {
        border: 4px solid transparent;
    }

    .arrow.up {
        border-top: none;
        border-bottom-color: #444;
    }

    .arrow.down {
        border-bottom: none;
        border-top-color: #444;
    }

    .arrow.left {
        border-left: none;
        border-right-color: #444;
    }

    .arrow.right {
        border-right: none;
        border-left-color: #444;
    }

    .summary {
        flex: none;
        display: flex;
        align-items: center;
        gap: 9px;
        height: 31px;
        padding: 0 9px 3px;
        background: #f6f6f6;
    }

    .summary label {
        display: flex;
        align-items: center;
    }

    .summary label:nth-child(n + 4) span {
        width: 63px;
    }

    .show-summary {
        padding-right: 8px;
        background: #d6def4;
    }

    /* status bars */

    .status {
        display: flex;
        gap: 3px;
        height: 19px;
        padding-top: 1px;
        border-top: 1px solid #fff;
        background: var(--field);
    }

    .status.hint {
        height: 20px;
        background: var(--face);
    }

    .cell {
        padding: 0 1px 0 1px;
        border: 1px solid;
        border-color: #8b8d92 #fff #fff #8b8d92;
        line-height: 15px;
    }

    .stamp {
        display: flex;
        align-items: center;
        gap: 6px;
    }

    .tip {
        width: 44px;
        padding-left: 9px;
    }

    .rest {
        flex: 1;
    }

    /* sale dialog */

    .dialog {
        position: absolute;
        top: 317px;
        left: 389px;
        width: 608px;
        padding: 0 6px 6px;
        border: 1px solid #1c2836;
        border-radius: 7px 7px 5px 5px;
        background: linear-gradient(#b3d3f3 0, #a6cbf0 120px, #cbdff2 121px, #b4d3ef);
        box-shadow: inset 0 0 0 1px #e8f4ff, 3px 4px 12px 4px rgba(0, 0, 0, .6);
    }

    .dialog-title {
        display: flex;
        align-items: center;
        gap: 6px;
        height: 28px;
        margin: 0 -5px;
        padding: 0 5px 2px 6px;
        border-radius: 6px 6px 0 0;
        background: linear-gradient(100deg, #dce9f8 0, #c6dcf5 15%, #a3c9ee 28%, #b9d8f4 36%, #98c2ea 50%, #b4d5f3 65%, #a0c8ee 80%, #c6def6 100%);
    }

    .dialog-title button {
        align-self: flex-start;
        justify-content: center;
        width: 47px;
        height: 19px;
        margin-left: auto;
        border: 1px solid #5b2420;
        border-top: none;
        border-radius: 0 0 4px 4px;
        background: linear-gradient(#e2a69c 0, #d0675a 45%, #b42a1a 50%, #cf5f48 100%);
    }

    .dialog-title svg {
        width: 14px;
        height: 12px;
    }

    .dialog-title .icon,
    .dialog-title :global(.icon) {
        width: 16px;
        height: 16px;
    }

    .client {
        display: flex;
        gap: 6px;
        padding: 3px 5px 5px 4px;
        border: 1px solid #6c7f94;
        background: var(--face);
    }

    .card-form {
        flex: 1;
        padding-top: 3px;
    }

    .tabs {
        display: flex;
        height: 20px;
    }

    .tab {
        position: relative;
        width: 76px;
        padding: 2px 0 0 5px;
    }

    .tab.second {
        margin-left: -11px;
        padding-left: 6px;
    }

    .tab svg {
        position: absolute;
        inset: 0;
        width: 76px;
        height: 20px;
    }

    .tab span {
        position: relative;
    }

    .page {
        height: 344px;
        border: 1px solid #999;
        border-top-color: #a4a4a4;
        box-shadow: 1px 1px 0 #fff;
    }

    .upper {
        display: flex;
        justify-content: space-between;
        padding-right: 4px;
    }

    .upper-left {
        width: 313px;
        padding-top: 8px;
    }

    .fields {
        display: grid;
        grid-template-columns: 74px 85px 71px 82px;
        row-gap: 10px;
        align-items: center;
    }

    .fields label,
    .fields .lbl {
        text-align: right;
        height: 18px;
        line-height: 18px;
    }

    .span3 {
        grid-column: span 3;
    }

    .with-icon {
        display: flex;
        gap: 6px;
    }

    .times {
        display: flex;
        justify-content: space-between;
        margin-top: 9px;
        padding-right: 1px;
    }

    .password {
        display: flex;
        flex-direction: column;
        gap: 6px;
        width: 91px;
        padding: 3px 0 0 9px;
    }

    .times-box {
        display: grid;
        grid-template-columns: 81px 52px 74px;
        gap: 3px 0;
        align-items: center;
        width: 218px;
        height: 49px;
        padding: 2px 4px 3px;
        border: 1px solid #999;
        box-shadow: inset 1px 1px 0 #fff, 1px 1px 0 #fff;
    }

    .times-box .type {
        grid-column: span 2;
    }

    .times-box .radio {
        gap: 5px;
    }

    .times-box .radio:last-child {
        padding-left: 13px;
    }

    .limit {
        display: grid;
        grid-template-columns: 86px 65px 85px auto;
        align-items: center;
        margin-top: 3px;
        padding-left: 9px;
    }

    .limit.last {
        grid-template-columns: 86px 65px 99px auto;
        margin-top: 6px;
    }

    .limit.last :global(.combo) {
        margin-right: 14px;
    }

    .upper-right {
        display: flex;
        flex-direction: column;
        width: 122px;
        padding-top: 5px;
    }

    .photo {
        justify-content: center;
        width: 122px;
        height: 156px;
        padding-bottom: 2px;
        border: 1px solid;
        border-color: #8c8e92 #fff #fff #8c8e92;
        background: #efefef;
    }

    .photo-tools {
        display: flex;
        gap: 6px;
        margin: 4px 4px 0 auto;
    }

    hr {
        width: auto;
        height: 2px;
        margin: 5px 0 6px;
        border: none;
        border-top: 1px solid #999;
        background: #fff;
    }

    hr.short {
        margin: 4px 6px 7px;
    }

    .referral {
        display: grid;
        grid-template-columns: 78px 85px 95px 47px 78px 35px 20px;
        row-gap: 8px;
        align-items: center;
        text-align: right;
    }

    .referral label,
    .referral .lbl {
        padding-right: 12px;
    }

    .referral .near {
        padding-right: 4px;
    }

    .referral .mid {
        padding-right: 6px;
    }

    .referral .unit {
        padding-left: 6px;
        text-align: left;
    }

    .referral + hr {
        margin: 7px 0 4px;
    }

    .points {
        display: flex;
        align-items: center;
        gap: 8px;
        padding: 0 21px 0 5px;
    }

    .points.second {
        gap: 6px;
        margin-top: 9px;
        padding-right: 18px;
    }

    .points.second + hr {
        margin-top: 7px;
    }

    .push {
        margin-left: auto;
    }

    .rule {
        position: relative;
        width: 93px;
    }

    .picked select {
        background: linear-gradient(#3399ff, #3399ff) 1px 1px / 62px 13px no-repeat;
        color: #fff;
    }

    .dropdown {
        position: absolute;
        top: 19px;
        left: 0;
        width: 95px;
        border: 1px solid #333;
        border-bottom: none;
        background: var(--field);
    }

    .dropdown li {
        height: 13px;
        padding-left: 2px;
        line-height: 13px;
    }

    .dropdown .selected {
        background: #3399ff;
        color: #fff;
    }

    fieldset {
        display: flex;
        flex-direction: column;
        gap: 4px;
        min-width: 0;
        width: 132px;
        margin: 0;
        padding: 7px 16px 9px;
        border: 1px solid #999;
        box-shadow: inset -1px -1px 0 #fff;
    }

    legend {
        margin-left: -10px;
        padding: 0 1px;
    }

    .round {
        justify-content: center;
        gap: 4px;
        width: 78px;
        height: 25px;
        margin-left: 11px;
        border: 1px solid #123c6c;
        border-radius: 3px;
        background: #fdfdfd;
    }

    .print-block {
        display: flex;
        flex-direction: column;
        gap: 4px;
        width: 90px;
        margin: 72px 0 0 8px;
    }

    .print-block :global(.combo) {
        width: 88px;
    }

    .print-block :global(.check) {
        gap: 5px;
    }

    .round.low {
        width: 90px;
        height: 22px;
        margin: 2px 0 0;
    }

    dl {
        display: flex;
        flex-direction: column;
        gap: 4px;
        margin: 2px 0 26px;
    }

    dd {
        height: 16px;
        padding-left: 2px;
        color: #e8141c;
    }

    dd.mono {
        font-size: 10px;
    }

    .ime {
        position: absolute;
        right: 0;
        bottom: 0;
        display: flex;
        align-items: center;
        gap: 6px;
        width: 133px;
        height: 33px;
        padding: 2px 0 0 13px;
        border: 1px solid #a8cf4e;
        border-radius: 6px 0 0 0;
        background:
            radial-gradient(circle 16px at 102px 18px, #b4e04a 20%, transparent),
            radial-gradient(circle 16px at 122px 18px, #8ecb1c 20%, transparent),
            radial-gradient(ellipse 34px 12px at 78px 6px, #f6f2d8, transparent),
            linear-gradient(#dff5a4, #bfe868 60%, #b2e04c);
        color: #5d8f0c;
        font-size: 16px;
    }

    .ime svg {
        width: 50px;
        height: 20px;
    }
</style>
